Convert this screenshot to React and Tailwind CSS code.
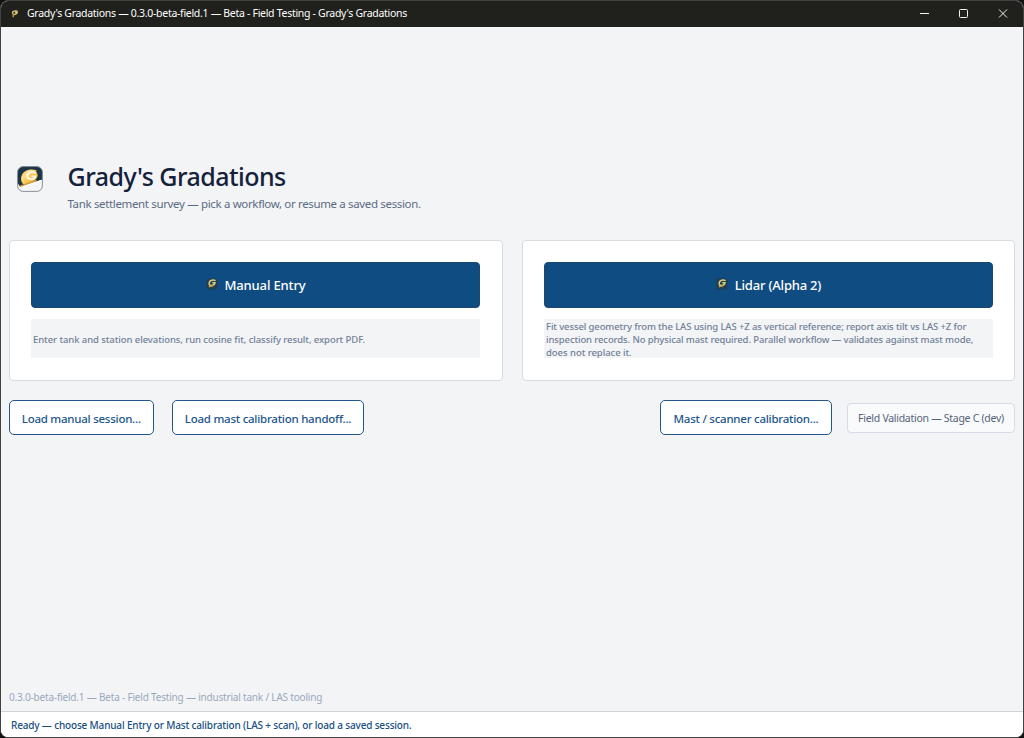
import React from "react";

function Logo({ className }) {
  return (
    <svg viewBox="0 0 26 26" className={className}>
      <defs>
        <linearGradient id="gold" x1="0" y1="0" x2="1" y2="1">
          <stop offset="0" stopColor="#f3a92a" />
          <stop offset="0.3" stopColor="#ffe08a" />
          <stop offset="0.65" stopColor="#f8bf3e" />
          <stop offset="1" stopColor="#f0a51b" />
        </linearGradient>
      </defs>
      <rect x="0.6" y="0.6" width="24.8" height="24.8" rx="5.5" fill="#f3f5f7" />
      <path d="M0.6 17V6.1A5.5 5.5 0 0 1 6.1 0.6H19.9A5.5 5.5 0 0 1 25.4 6.1V13.5L3 20.5Z" fill="#1d3347" />
      <path d="M1 20.5L25.2 14V20L20 25H5L1 22Z" fill="#f3f5f7" />
      <path d="M20 4.5C15 2.2 7.5 3.5 5 8.500C3 13 4.500 17.500 7 18.500C13 17.500 20 15.500 20.800 9L19 5Z" fill="url(#gold)" />
      <path d="M18.700 7.200C15.500 4.500 10.700 6 10.300 9.700C10.200 14 17 14.500 18.300 10.400H14.500" fill="none" stroke="#fffaf0" strokeWidth="1.800" />
      <path d="M2.800 20.500L19.500 14.500" stroke="#d59b43" strokeWidth="1.500" />
      <path d="M4.500 21.500L24.500 14.500" stroke="#fff" strokeWidth="1.300" />
      <rect x="0.600" y="0.600" width="24.800" height="24.800" rx="5.500" fill="none" stroke="#7c8791" strokeWidth="0.900" />
    </svg>
  );
}

function MiniLogo({ className }) {
  return (
    <svg viewBox="0 0 12 12" className={className}>
      <rect x="0.5" y="0.5" width="11" height="11" rx="2.5" fill="#1f3f55" />
      <path d="M9.600 2.700C7 1.300 3.800 2.300 3.200 4.700C2.700 7.300 4.700 8 6.800 7.300C8.300 6.800 9 5.800 9 4.800H6.300" fill="none" stroke="#dccb7c" strokeWidth="1.500" />
      <path d="M2.800 8.900L7.500 7.600" stroke="#c79a35" strokeWidth="1.100" />
    </svg>
  );
}

function WorkflowCard({ title, titleClass, children }) {
  return (
    <section className="h-[141px] rounded-[4px] border border-[#d8dce1] bg-white px-[21px] pt-[21px]">
      <button className="flex h-[46px] w-[449px] items-center justify-center rounded-[4px] border border-[#1b4770] bg-[#0f4c81] pt-px text-white">
        <MiniLogo className="mr-[7px] mb-1 size-3" />
        <span className={titleClass}>{title}</span>
      </button>
      <div className="mt-[11px] flex h-[39px] w-[449px] items-center bg-[#f3f4f6] px-[2px] pt-[2px] text-[9.5px] leading-[13px] font-medium text-[#718096]">
        <div>{children}</div>
      </div>
    </section>
  );
}

export default function App() {
  return (
    <div className="h-[738px] w-[1024px] overflow-hidden bg-[#111] font-['Noto_Sans','Open_Sans',sans-serif] whitespace-nowrap">
      <div className="flex h-full flex-col overflow-hidden rounded-[8px] border border-[#414141] bg-[#f3f4f6]">
        <header className="flex h-[26px] shrink-0 items-center bg-[#20201c] text-white">
          <svg viewBox="0 0 8 8" className="ml-[10px] size-2">
            <path d="M6.500 1.200C3 .3 1 1.700 1.700 3.500C2.800 5.200 5.500 4.500 6.300 2.500H4" fill="none" stroke="#dbc67b" strokeWidth="1.300" />
            <path d="M2.300 4V7.200" stroke="#c9981e" strokeWidth="1.400" />
          </svg>
          <span className="ml-2 text-[10.5px] tracking-[-0.295px]">Grady's Gradations — 0.3.0-beta-field.1 — Beta - Field Testing - Grady's Gradations</span>
          <svg viewBox="0 0 90 12" className="mr-[14px] mb-px ml-auto h-3 w-[90px]" fill="none" stroke="#f2f2f2">
            <path d="M1 5.500H10" />
            <rect x="40.500" y="1.500" width="8" height="8" rx="1" />
            <path d="M80 1.500L88 9.500M88 1.500L80 9.500" />
          </svg>
        </header>

        <main className="flex min-h-0 flex-1 flex-col px-2">
          <div className="mt-[132px] flex h-[81px]">
            <Logo className="mt-[7px] ml-[7.5px] size-[26px]" />
            <div className="ml-[25px]">
              <h1 className="text-[25px] leading-[35px] font-medium tracking-[-0.54px] text-[#14213a]">Grady's Gradations</h1>
              <p className="mt-[2px] text-[11.5px] leading-4 tracking-[-0.35px] text-[#5b6b83]">Tank settlement survey — pick a workflow, or resume a saved session.</p>
            </div>
          </div>

          <div className="grid grid-cols-[494px_493px] gap-[19px]">
            <WorkflowCard title="Manual Entry" titleClass="text-[13px] font-medium tracking-[-0.15px]">
              <span className="tracking-[-0.075px]">Enter tank and station elevations, run cosine fit, classify result, export PDF.</span>
            </WorkflowCard>
            <WorkflowCard title="Lidar (Alpha 2)" titleClass="text-[13px] font-medium tracking-[-0.2px]">
              <span className="tracking-[-0.12px]">Fit vessel geometry from the LAS using LAS +Z as vertical reference; report axis tilt vs LAS +Z for</span><br />
              <span className="tracking-[-0.115px]">inspection records. No physical mast required. Parallel workflow — validates against mast mode,</span><br />
              <span className="tracking-[-0.05px]">does not replace it.</span>
            </WorkflowCard>
          </div>

          <div className="mt-[19px] flex h-[35px] items-center text-[11.5px] font-medium tracking-[-0.25px] text-[#23568a]">
            <button className="h-[35px] w-[144.5px] rounded-[5px] border border-[#23568a] bg-white pt-[2px]">Load manual session...</button>
            <button className="ml-[18.5px] h-[35px] w-[192px] rounded-[5px] border border-[#23568a] bg-white pt-[2px]">Load mast calibration handoff...</button>
            <button className="ml-auto h-[35px] w-[172px] rounded-[5px] border border-[#23568a] bg-white pt-[2px]">Mast / scanner calibration...</button>
            <button className="ml-[15px] h-[30px] w-[168px] rounded-[4px] border border-[#d5dce7] bg-[#f8fafc] pt-[2px] text-[10.5px] font-normal tracking-[-0.28px] text-[#566379]">Field Validation — Stage C (dev)</button>
          </div>

          <p className="mt-auto mb-[7px] text-[10px] leading-[14px] tracking-[-0.19px] text-[#9aa8bc]">0.3.0-beta-field.1 — Beta - Field Testing — industrial tank / LAS tooling</p>
        </main>

        <footer className="flex h-[26px] shrink-0 items-center border-t border-[#cfd4da] bg-white pt-px pl-[10px] text-[10px] font-medium tracking-[-0.165px] text-[#184f82]">
          <span>Ready — choose Manual Entry or Mast calibration (LAS + scan), or load a saved session.</span>
        </footer>
      </div>
    </div>
  );
}
